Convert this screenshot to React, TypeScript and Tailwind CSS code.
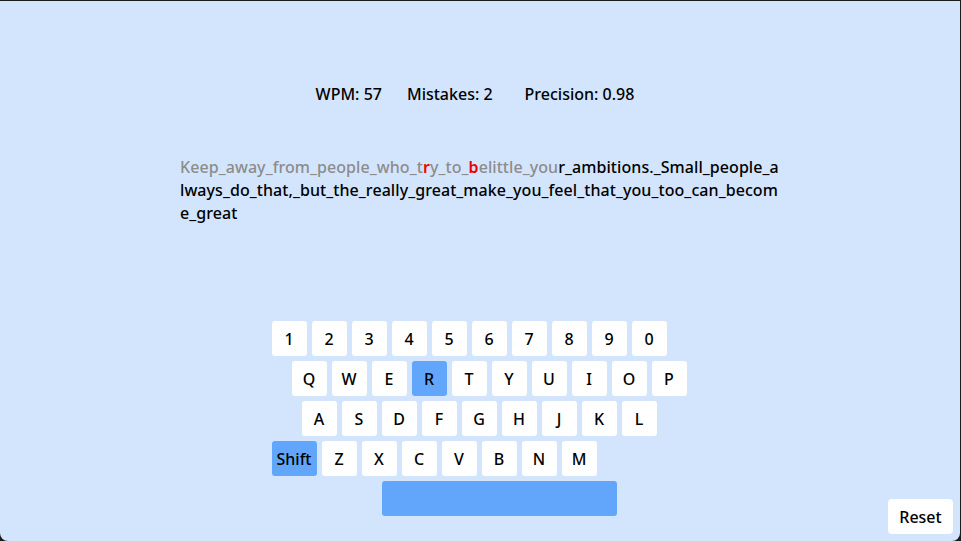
import React from "react";

const rows: { keys: string[]; pad: string }[] = [
  { keys: ["1", "2", "3", "4", "5", "6", "7", "8", "9", "0"], pad: "pl-0" },
  { keys: ["Q", "W", "E", "R", "T", "Y", "U", "I", "O", "P"], pad: "pl-[20px]" },
  { keys: ["A", "S", "D", "F", "G", "H", "J", "K", "L"], pad: "pl-[30px]" },
];

function Key({ label, active, wide }: { label: string; active?: boolean; wide?: boolean }) {
  return (
    <div
      className={`h-[35px] ${wide ? "w-[45px]" : "w-[35px]"} rounded-[3px] flex items-center justify-center text-[16px] text-black ${
        active ? "bg-[#62a6fc]" : "bg-white"
      }`}
    >
      {label}
    </div>
  );
}

export default function App() {
  return (
    <div className="w-[961px] h-[541px] bg-[#1c1c1c] overflow-hidden">
      <div
        className="relative mt-[1px] mr-[1px] h-[540px] bg-[#d3e5fc] rounded-b-[8px] flex flex-col items-center font-medium"
        style={{ fontFamily: '"Noto Sans", "Open Sans", sans-serif' }}
      >
        <div className="pt-[81px] pr-[10px] flex text-[16px] leading-[24px] text-black">
          <span>WPM: 57</span>
          <span className="ml-[25px]">Mistakes: 2</span>
          <span className="ml-[32px]">Precision: 0.98</span>
        </div>

        <div className="mt-[50px] w-[600px] pr-[1px] text-[16px] leading-[23px] tracking-[0.07px] break-all text-black">
          <span className="text-[#8c8c8c]">Keep_away_from_people_who_t</span>
          <span className="text-[#f20000] font-semibold">r</span>
          <span className="text-[#8c8c8c]">y_to_</span>
          <span className="text-[#f20000] font-semibold">b</span>
          <span className="text-[#8c8c8c]">elittle_you</span>
          <span>
            r_ambitions._Small_people_always_do_that,_but_the_really_great_make_you_feel_that_you_too_can_become_great
          </span>
        </div>

        <div className="mt-[96px] w-[417px] flex flex-col gap-[5px]">
          {rows.map((r, i) => (
            <div key={i} className={`flex gap-[5px] ${r.pad}`}>
              {r.keys.map((k) => (
                <Key key={k} label={k} active={k === "R"} />
              ))}
            </div>
          ))}
          <div className="flex gap-[5px]">
            <Key label="Shift" active wide />
            {["Z", "X", "C", "V", "B", "N", "M"].map((k) => (
              <Key key={k} label={k} />
            ))}
          </div>
          <div className="flex pl-[110px]">
            <div className="h-[35px] w-[235px] rounded-[3px] bg-[#62a6fc]" />
          </div>
        </div>

        <button className="absolute right-[7px] bottom-[7px] h-[35px] w-[65px] bg-white rounded-[4px] text-[16px] text-black">
          Reset
        </button>
      </div>
    </div>
  );
}
